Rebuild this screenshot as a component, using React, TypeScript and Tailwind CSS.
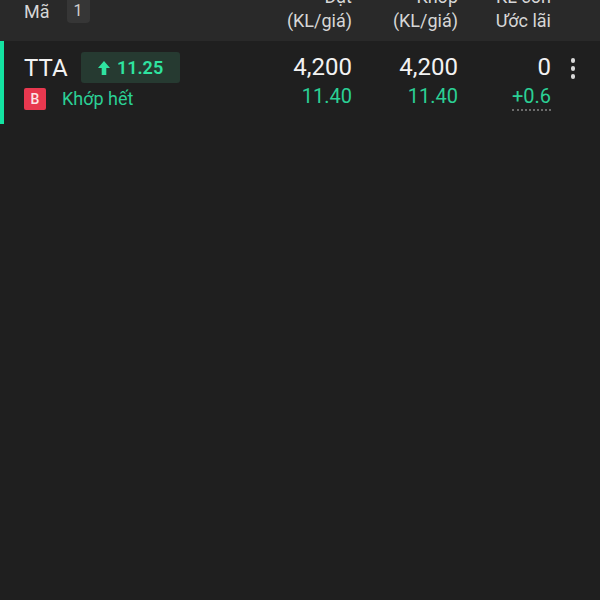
import { memo } from "react";

const font = { fontFamily: "Roboto, 'Noto Sans', sans-serif" };

function UpArrow() {
  return (
    <svg width="14" height="16" viewBox="0 0 14 16" className="mr-[6px]">
      <path d="M7 1 L13 8 H9.3 V15 H4.7 V8 H1 Z" fill="#2fe3a0" />
    </svg>
  );
}

const OrderRow = memo(function OrderRow() {
  return (
    <div className="flex h-[83px] border-l-[4px] border-[#14e3a2] bg-[#1f1f1f]">
      <div className="flex w-[242px] flex-col pl-[20px] pt-[11px]">
        <div className="flex items-center">
          <span className="text-[24px] leading-[30px] text-[#f2f2f2]">TTA</span>
          <span className="ml-[13px] flex h-[31px] w-[99px] items-center justify-center rounded-[3px] bg-[#263a31] text-[18px] font-semibold text-[#2fe3a0]">
            <UpArrow />
            11.25
          </span>
        </div>
        <div className="mt-[5px] flex items-center">
          <span className="flex h-[22px] w-[22px] items-center justify-center rounded-[2px] bg-[#e8384f] text-[14px] font-medium text-[#fbe4e6]">
            B
          </span>
          <span className="ml-[16px] text-[18px] leading-[22px] text-[#2bd095]">Khớp hết</span>
        </div>
      </div>
      <div className="flex w-[106px] flex-col items-end pt-[11px]">
        <span className="text-[24px] leading-[30px] text-[#f2f2f2]">4,200</span>
        <span className="mt-[1px] text-[20px] leading-[26px] text-[#2bd095]">11.40</span>
      </div>
      <div className="flex w-[106px] flex-col items-end pt-[11px]">
        <span className="text-[24px] leading-[30px] text-[#f2f2f2]">4,200</span>
        <span className="mt-[1px] text-[20px] leading-[26px] text-[#2bd095]">11.40</span>
      </div>
      <div className="flex w-[93px] flex-col items-end pt-[11px]">
        <span className="text-[24px] leading-[30px] text-[#f2f2f2]">0</span>
        <span className="mt-[1px] border-b-[2px] border-dotted border-[#6b6b6b] text-[20px] leading-[26px] text-[#2bd095]">
          +0.6
        </span>
      </div>
      <div className="flex flex-1 flex-col items-center gap-[3.5px] pt-[17px] pr-[5px]">
        <span className="h-[4.5px] w-[4.5px] rounded-full bg-[#d8d8d8]" />
        <span className="h-[4.5px] w-[4.5px] rounded-full bg-[#d8d8d8]" />
        <span className="h-[4.5px] w-[4.5px] rounded-full bg-[#d8d8d8]" />
      </div>
    </div>
  );
});

function HeaderCell({ top, bottom, width }: { top: string; bottom: string; width: string }) {
  return (
    <div className={`flex flex-col items-end ${width}`}>
      <span>{top}</span>
      <span>{bottom}</span>
    </div>
  );
}

export default function App() {
  return (
    <div className="h-[600px] w-[600px] overflow-hidden bg-[#1f1f1f]" style={font}>
      <div className="flex h-[41px] items-end overflow-hidden bg-[#292929] text-[18px] leading-[24px] text-[#d6d6d6]">
        <div className="flex h-full w-[246px] items-start self-start pl-[24px]">
          <span className="leading-[24px]">Mã</span>
          <span className="ml-[17px] mt-[-4px] flex h-[27px] w-[23px] items-center justify-center rounded-[4px] bg-[#363636] pt-[2px] text-[16px] text-[#cfcfcf]">
            1
          </span>
        </div>
        <div className="flex pb-[8px]">
          <HeaderCell top="Đặt" bottom="(KL/giá)" width="w-[106px]" />
          <HeaderCell top="Khớp" bottom="(KL/giá)" width="w-[106px]" />
          <HeaderCell top="KL còn" bottom="Ước lãi" width="w-[93px]" />
        </div>
      </div>
      <OrderRow />
    </div>
  );
}
